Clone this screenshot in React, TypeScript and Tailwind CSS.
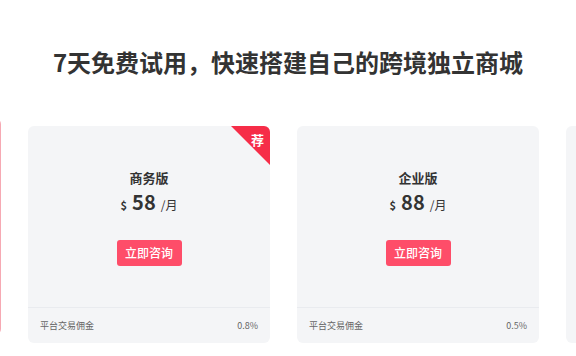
const plans = [
  { name: "商务版", price: "58", fee: "0.8%", hot: true },
  { name: "企业版", price: "88", fee: "0.5%" },
];

const font = "font-['Noto_Sans_CJK_SC','Noto_Sans',sans-serif]";

const PlanCard = ({
  name,
  price,
  fee,
  hot,
}: {
  name: string;
  price: string;
  fee: string;
  hot?: boolean;
}) => {
  return (
    <div className="relative shrink-0 w-[242px] h-[217px] rounded-md bg-[#f4f5f7] overflow-hidden flex flex-col">
      {hot && (
        <>
          <div className="absolute top-0 right-0 w-[39px] h-[39px] bg-[#f62d48] [clip-path:polygon(0_0,100%_0,100%_100%)]" />
          <span className="absolute top-[5px] right-[6px] text-[13px] leading-[18px] font-bold text-white">
            荐
          </span>
        </>
      )}
      <div className="h-[181px] flex flex-col items-center pt-[44px]">
        <p className="text-[13px] leading-[16px] font-bold text-[#333]">{name}</p>
        <p className="mt-[4px] flex items-baseline gap-[5px] text-[#333] leading-[24px]">
          <span className="text-[11px] font-bold">$</span>
          <span className="text-[20px] font-bold">{price}</span>
          <span className="text-[12px]">/月</span>
        </p>
        <button className="mt-[23px] w-[65px] h-[26px] rounded-[3px] bg-[#fe4d69] text-white text-[12px] font-medium">
          立即咨询
        </button>
      </div>
      <div className="border-t border-[#e9ebef] flex-1 flex items-center justify-between px-[12px] text-[9px] text-[#666]">
        <span>平台交易佣金</span>
        <span>{fee}</span>
      </div>
    </div>
  );
};

// partially visible neighbours of the carousel, only their frames show
const EdgeCard = ({ active }: { active?: boolean }) => (
  <div
    className={`shrink-0 w-[242px] h-[217px] rounded-md ${
      active ? "-translate-y-2 border border-[#f6a9b3] bg-white" : "bg-[#f4f5f7]"
    }`}
  />
);

export default function App() {
  return (
    <div className={`w-[576px] h-[356px] bg-white overflow-hidden ${font}`}>
      <h1 className="pt-[46px] text-center text-[24px] leading-[32px] font-bold text-[#333]">
        7天免费试用，快速搭建自己的跨境独立商城
      </h1>
      <div className="mt-[48px] flex items-start gap-[27px] ml-[-241px]">
        <EdgeCard active />
        {plans.map((p) => (
          <PlanCard key={p.name} {...p} />
        ))}
        <EdgeCard />
      </div>
    </div>
  );
}
